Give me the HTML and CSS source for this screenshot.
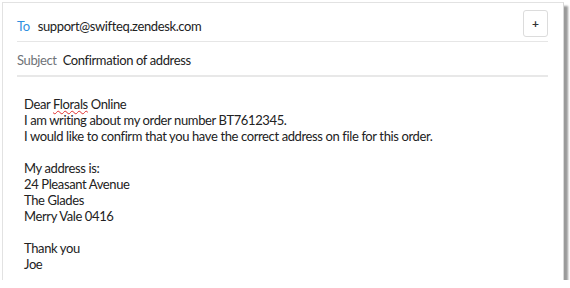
FILE: index.html
```html
<!DOCTYPE html>
<html>
<head>
<meta charset="utf-8">
<link rel="stylesheet" href="styles.css">
</head>
<body>
<div class="panel">
  <div class="fields">
    <div class="row row-to">
      <span class="label label-to">To</span>
      <span class="value">support@swifteq.zendesk.com</span>
      <button class="plus">+</button>
    </div>
    <div class="row row-subject">
      <span class="label">Subject</span>
      <span class="value">Confirmation of address</span>
    </div>
  </div>
  <div class="body">
    <div>Dear <span class="spell">Florals</span> Online</div>
    <div>I am writing about my order number BT7612345.</div>
    <div>I would like to confirm that you have the correct address on file for this order.</div>
    <div class="blank"></div>
    <div>My address is:</div>
    <div>24 Pleasant Avenue</div>
    <div>The Glades</div>
    <div>Merry Vale 0416</div>
    <div class="blank"></div>
    <div>Thank you</div>
    <div>Joe</div>
  </div>
</div>
</body>
</html>
```
FILE: styles.css
```css
html, body {
  margin: 0;
  padding: 0;
  background: #ffffff;
}
body {
  font-family: Lato, "Noto Sans", sans-serif;
  font-size: 13px;
  letter-spacing: -0.38px;
  color: #222222;
}
.panel {
  margin: 2px 0 0 2px;
  width: 560px;
  height: 277px;
  background: #ffffff;
  border-top: 1px solid #e2e2e2;
  border-left: 1px solid #e2e2e2;
  border-right: 1px solid #d8d8d8;
  box-shadow: 4px 4px 2px #9a9a9a;
}
.fields {
  margin: 0 15px 0 14px;
}
.row {
  display: flex;
  line-height: 16px;
  border-bottom: 1px solid #e6e6e6;
}
.row-to {
  height: 38px;
  align-items: flex-start;
}
.row-to .label,
.row-to .value {
  margin-top: 15px;
}
.row-subject {
  height: 35px;
  align-items: center;
  padding-top: 3px;
  box-sizing: border-box;
  border-bottom: 2px solid #e8e8e8;
}
.label {
  color: #6f7378;
  margin-right: 6px;
}
.label-to {
  color: #2f8fe0;
  margin-right: 8px;
}
.value {
  flex: 1;
}
.plus {
  width: 25px;
  height: 27px;
  margin-top: 7px;
  padding: 0;
  border: 1px solid #dcdcdc;
  border-radius: 3px;
  background: #ffffff;
  font-family: Lato, sans-serif;
  font-size: 12px;
  font-weight: bold;
  color: #333;
}
.body {
  padding: 19px 0 0 21px;
  line-height: 16px;
}
.blank {
  height: 16px;
}
.spell {
  text-decoration-line: underline;
  text-decoration-style: wavy;
  text-decoration-color: #e03030;
  text-decoration-thickness: 1px;
  text-underline-offset: 1px;
}
```
